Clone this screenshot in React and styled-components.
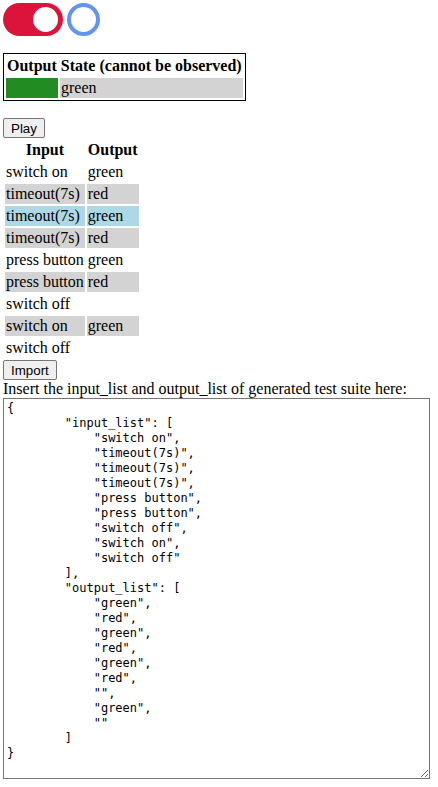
import React from "react";
import styled, { createGlobalStyle } from "styled-components";

const Global = createGlobalStyle`
  html, body { margin: 0; padding: 0; background: #fff; }
  body { padding: 3px; font-family: "Liberation Serif", "Times New Roman", serif; font-size: 16px; color: #000; }
`;

const ToggleRow = styled.div`
  display: flex;
  align-items: center;
  gap: 4px;
  height: 33px;
  margin-bottom: 17px;
`;

const Switch = styled.div`
  width: 60px;
  height: 33px;
  border-radius: 16.5px;
  background: #dc143c;
  display: flex;
  align-items: center;
  justify-content: flex-end;
  padding-right: 5px;
  box-sizing: border-box;
`;

const Knob = styled.div`
  width: 25px;
  height: 25px;
  border-radius: 50%;
  background: #fff;
`;

const Ring = styled.div`
  width: 33px;
  height: 33px;
  border-radius: 50%;
  border: 4px solid #6495ed;
  box-sizing: border-box;
`;

const StateTable = styled.table`
  border: 1px solid #000;
  border-spacing: 2px;
  margin-bottom: 17px;
  font-size: 16px;
  th, td { padding: 1px; text-align: left; }
  th { text-align: center; font-weight: bold; }
`;

const Swatch = styled.td`
  width: 50px;
  background: ${(p) => p.$color};
`;

const Cell = styled.td`
  padding: 1px;
  background: ${(p) => p.$bg || "transparent"};
`;

const Button = styled.button`
  font-family: "Liberation Sans", Arial, sans-serif;
  font-size: 13.333px;
  height: 20px;
  box-sizing: border-box;
  padding: 0 7px;
  border: 1px solid #767676;
  border-radius: 2px;
  background: #efefef;
  color: #000;
  display: block;
`;

const SeqTable = styled.table`
  border-spacing: 2px;
  font-size: 16px;
  th { padding: 1px; font-weight: bold; text-align: center; }
`;

const Label = styled.div`
  line-height: 18px;
`;

const Area = styled.textarea`
  display: block;
  width: 427px;
  height: 381px;
  box-sizing: border-box;
  font-family: "DejaVu Sans Mono", "Liberation Mono", monospace;
  font-size: 12px;
  line-height: 15px;
  padding: 2px 3px;
  border: 1px solid #767676;
  color: #000;
  tab-size: 8;
  resize: both;
  margin: 0;
`;

const rows = [
  ["switch on", "green", null],
  ["timeout(7s)", "red", "#d3d3d3"],
  ["timeout(7s)", "green", "#add8e6"],
  ["timeout(7s)", "red", "#d3d3d3"],
  ["press button", "green", null],
  ["press button", "red", "#d3d3d3"],
  ["switch off", "", null],
  ["switch on", "green", "#d3d3d3"],
  ["switch off", "", null],
];

const json = `{
\t"input_list": [
\t    "switch on",
\t    "timeout(7s)",
\t    "timeout(7s)",
\t    "timeout(7s)",
\t    "press button",
\t    "press button",
\t    "switch off",
\t    "switch on",
\t    "switch off"
\t],
\t"output_list": [
\t    "green",
\t    "red",
\t    "green",
\t    "red",
\t    "green",
\t    "red",
\t    "",
\t    "green",
\t    ""
\t]
}`;

export default function App() {
  return (
    <>
      <Global />
      <ToggleRow>
        <Switch>
          <Knob />
        </Switch>
        <Ring />
      </ToggleRow>
      <StateTable>
        <tbody>
          <tr>
            <th colSpan={2}>Output State (cannot be observed)</th>
          </tr>
          <tr>
            <Swatch $color="#228b22" />
            <Cell $bg="#d3d3d3">green</Cell>
          </tr>
        </tbody>
      </StateTable>
      <Button>Play</Button>
      <SeqTable>
        <thead>
          <tr>
            <th>Input</th>
            <th>Output</th>
          </tr>
        </thead>
        <tbody>
          {rows.map(([i, o, bg], k) => (
            <tr key={k}>
              <Cell $bg={bg}>{i}</Cell>
              <Cell $bg={o ? bg : null}>{o}</Cell>
            </tr>
          ))}
        </tbody>
      </SeqTable>
      <Button>Import</Button>
      <Label>Insert the input_list and output_list of generated test suite here:</Label>
      <Area defaultValue={json} spellCheck={false} />
    </>
  );
}
